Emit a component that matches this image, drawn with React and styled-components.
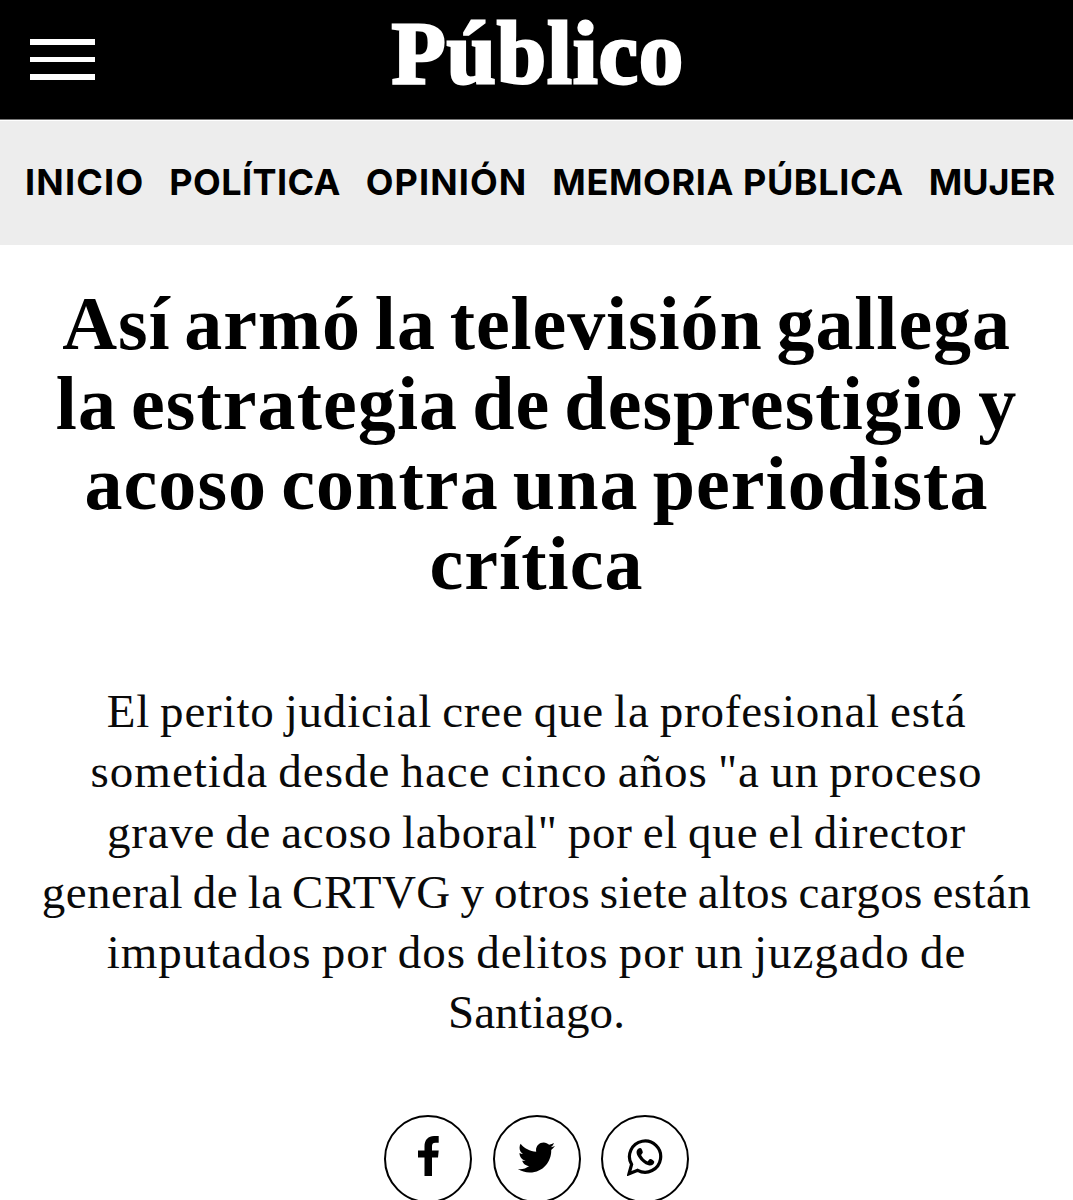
import styled, { createGlobalStyle } from "styled-components";
import { FaTwitter } from "react-icons/fa";

const GlobalStyle = createGlobalStyle`
*{
    box-sizing: border-box;
}
body{
    margin: 0;
    background: #fff;
    color: #000;
    font-family: "Liberation Serif", serif;
}
`;

const Page = styled.div`
height: 1200px;
overflow: hidden;
`;

const Header = styled.header`
display: grid;
grid-template-columns: 66px 1fr 66px;
align-items: center;
height: 120px;
padding: 0 30px;
background: #000;
border-bottom: 1px solid #777;
`;

const MenuButton = styled.button`
display: flex;
flex-direction: column;
gap: 12px;
border: 0;
padding: 0;
background: transparent;
cursor: pointer;
`;

const MenuBar = styled.span`
width: 65px;
height: 5.4px;
background: #fff;
`;

const Logo = styled.a`
align-self: start;
padding-left: 3px;
color: #fff;
text-align: center;
font-size: 88px;
line-height: 107px;
font-weight: 700;
letter-spacing: 1.3px;
-webkit-text-stroke: 3px #fff;
`;

const Nav = styled.nav`
display: flex;
align-items: center;
gap: 25px;
height: 125px;
padding: 0 0 3px 25px;
background: #ededed;
border-top: 1px solid #fff;
overflow: hidden;
`;

const NavLink = styled.a`
flex: none;
font-family: Inter, sans-serif;
font-size: 36px;
font-weight: 700;
white-space: nowrap;
letter-spacing: ${props => props.$spacing}px;
`;

const Article = styled.article`
padding-top: 38px;
text-align: center;
`;

const Title = styled.h1`
margin: 0;
font-size: 76px;
line-height: 80.1px;
font-weight: 700;
word-spacing: -6px;
`;

const Summary = styled.p`
margin: 78px 0 0;
font-size: 47px;
line-height: 60.1px;
color: #0a0a0a;
word-spacing: -2.5px;
`;

const Line = styled.span`
display: block;
white-space: nowrap;
letter-spacing: ${props => props.$spacing}px;
`;

const ShareRow = styled.div`
display: flex;
justify-content: center;
gap: 20.5px;
margin-top: 73px;
`;

const ShareButton = styled.a`
display: flex;
align-items: center;
justify-content: center;
width: 88px;
height: 88px;
padding-bottom: ${props => props.$lift}px;
border: 2.5px solid #000;
border-radius: 50%;
`;

const sections = [
    { name: "INICIO", spacing: 1.2 },
    { name: "POLÍTICA", spacing: 0.4 },
    { name: "OPINIÓN", spacing: 1.1 },
    { name: "MEMORIA PÚBLICA", spacing: 0.6 },
    { name: "MUJER", spacing: 0 },
];

const titleLines = [
    { text: "Así armó la televisión gallega", spacing: 0.9 },
    { text: "la estrategia de desprestigio y", spacing: 1.06 },
    { text: "acoso contra una periodista", spacing: 1.08 },
    { text: "crítica", spacing: 1.05 },
];

const summaryLines = [
    { text: "El perito judicial cree que la profesional está", spacing: 0.81 },
    { text: "sometida desde hace cinco años \"a un proceso", spacing: 0.98 },
    { text: "grave de acoso laboral\" por el que el director", spacing: 0.76 },
    { text: "general de la CRTVG y otros siete altos cargos están", spacing: 0.43 },
    { text: "imputados por dos delitos por un juzgado de", spacing: 1 },
    { text: "Santiago.", spacing: 0.1 },
];

function FacebookIcon() {
    return (
        <svg width="21" height="40" viewBox="0 0 21 40">
            <path d="M6.5 40 V21.5 H0 V14.5 H6.5 V10.5 C6.5 3.5 10.5 0 16 0 H20.7 V6.8 H17.5 C14.6 6.8 14 8.2 14 10.6 V14.5 H20.7 L20 21.5 H14 V40 Z" />
        </svg>
    );
}

function WhatsappIcon() {
    return (
        <svg width="36" height="37" viewBox="0 0 36 37" fill="none">
            <path d="M2 34.8 L4.6 25.4 A15.6 15.6 0 1 1 10.7 31.3 Z" stroke="#000" strokeWidth="3.2" />
            <path d="M12 9.3 C9 11 8.8 14 11.3 18 C14 22.2 17.5 25.2 21.5 26.3 C24.5 27 27.3 25.5 27.3 22.8 C27 21.4 24.3 19.6 22.8 20 L20.5 22.4 C17.8 21.3 15.2 18.5 14.1 16.1 L15.8 13.7 C16 12.5 14.6 9 13.4 9 Z" fill="#000" />
        </svg>
    );
}

export default function App() {
    return (
        <Page>
            <GlobalStyle />
            <Header>
                <MenuButton aria-label="Menú">
                    <MenuBar />
                    <MenuBar />
                    <MenuBar />
                </MenuButton>
                <Logo>Público</Logo>
            </Header>
            <Nav>
                {sections.map(section => (
                    <NavLink key={section.name} $spacing={section.spacing}>{section.name}</NavLink>
                ))}
            </Nav>
            <Article>
                <Title>
                    {titleLines.map(line => (
                        <Line key={line.text} $spacing={line.spacing}>{line.text}</Line>
                    ))}
                </Title>
                <Summary>
                    {summaryLines.map(line => (
                        <Line key={line.text} $spacing={line.spacing}>{line.text}</Line>
                    ))}
                </Summary>
                <ShareRow>
                    <ShareButton $lift={6}><FacebookIcon /></ShareButton>
                    <ShareButton $lift={3}><FaTwitter size={37} /></ShareButton>
                    <ShareButton $lift={3}><WhatsappIcon /></ShareButton>
                </ShareRow>
            </Article>
        </Page>
    )
}
